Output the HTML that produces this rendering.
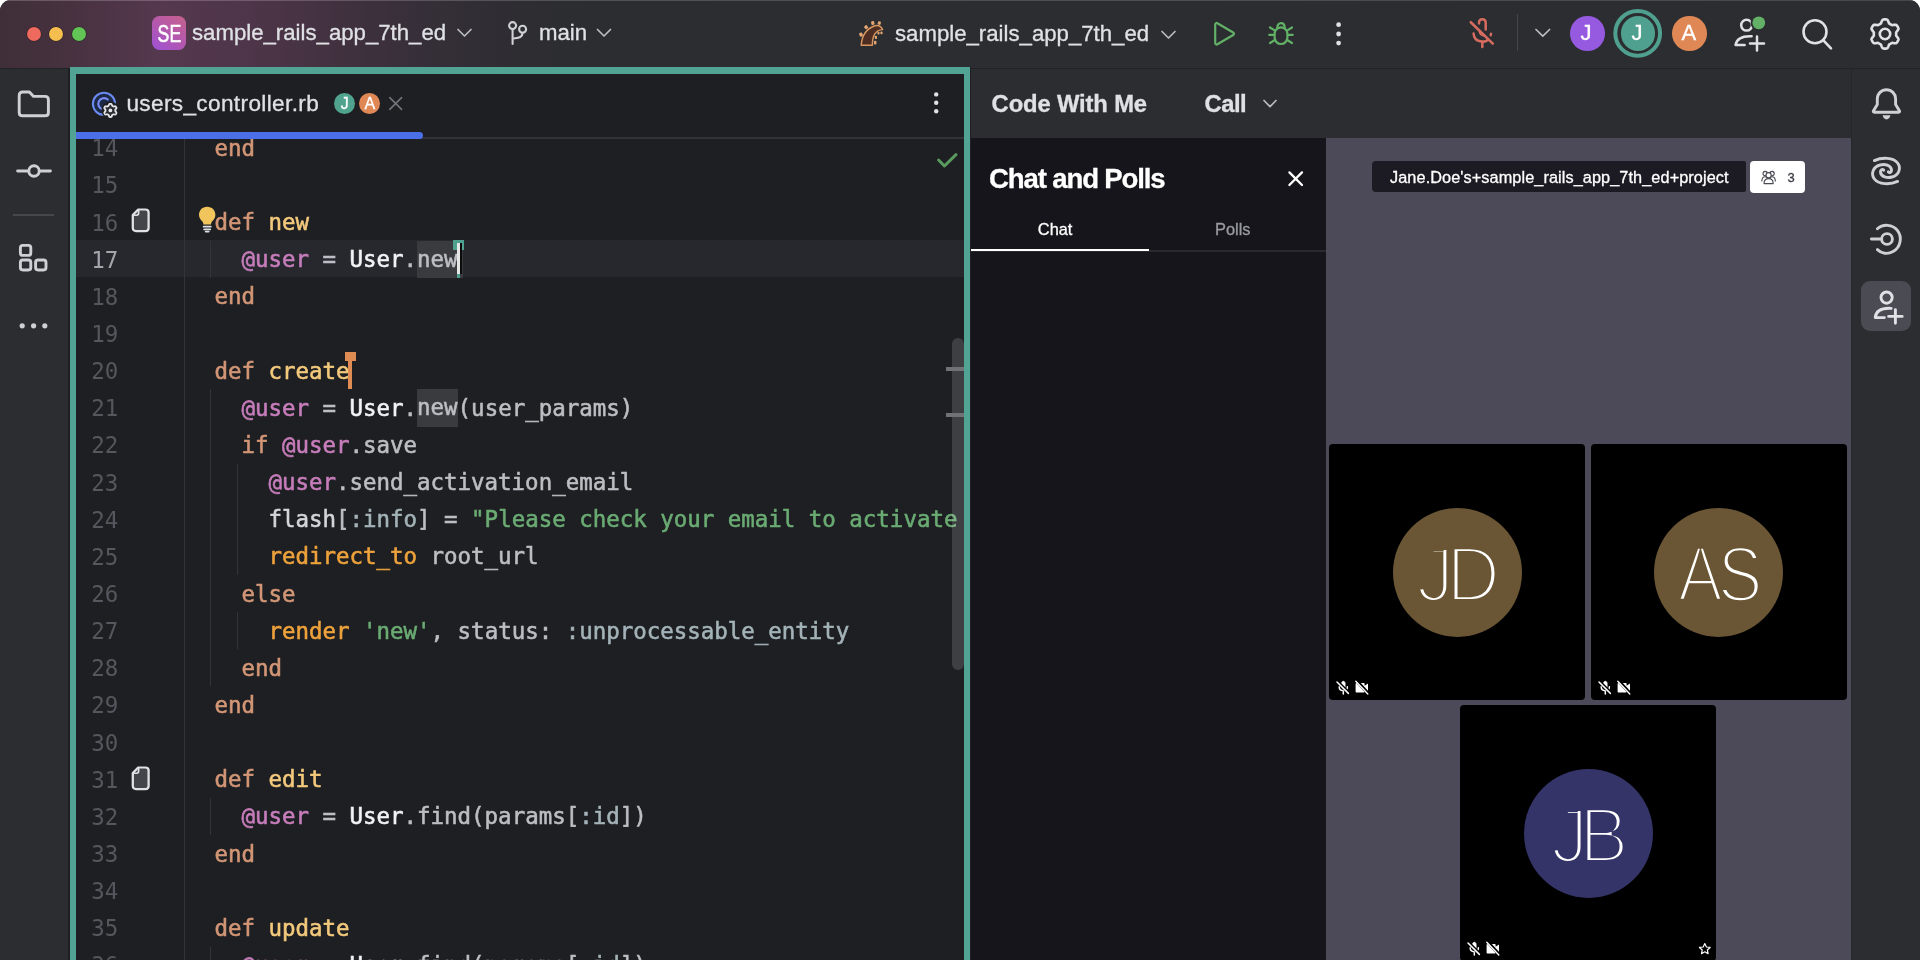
<!DOCTYPE html>
<html lang="en">
<head>
<meta charset="utf-8">
<title>users_controller.rb - sample_rails_app_7th_ed</title>
<style>
*{box-sizing:border-box;margin:0;padding:0}
html,body{width:1920px;height:960px;overflow:hidden;background:#fff}
body{font-family:"Liberation Sans",sans-serif;color:#dfe1e5;position:relative}
.abs{position:absolute}
#win{will-change:transform;position:absolute;left:0;top:0;width:1920px;height:960px;background:#2b2d30;border-radius:11px 11px 0 0;overflow:hidden}
/* ---------- title bar ---------- */
#titlebar{position:absolute;left:0;top:0;width:1920px;height:68px;
 background:linear-gradient(90deg,#3f2f39 0px,#46313e 60px,#55384e 160px,#4e3549 250px,#41313f 340px,#362f39 420px,#2f2d33 500px,#2b2d30 590px,#2b2d30 100%)}
#titlebar:before{content:"";position:absolute;left:0;top:0;right:0;height:1.4px;background:linear-gradient(90deg,rgba(255,255,255,.2),rgba(255,255,255,.13))}
#titleline{position:absolute;left:0;top:67.7px;width:1920px;height:1.3px;background:#222327}
.tl{position:absolute;top:27px;width:14px;height:14px;border-radius:50%;box-shadow:0 0 0 .6px rgba(0,0,0,.4)}
.ui{position:absolute;white-space:nowrap;-webkit-text-stroke:.3px;font-size:22.2px;line-height:30px;color:#dfe1e5;letter-spacing:0}
svg{position:absolute;overflow:visible}
/* ---------- left stripe ---------- */
#lstripe{position:absolute;left:0;top:69px;width:68px;height:891px;background:#2b2d30}
#lgap{position:absolute;left:68px;top:69px;width:2px;height:891px;background:#1e1f22}
/* ---------- editor ---------- */
#edwrap{position:absolute;left:70px;top:67px;width:900.3px;height:900px;background:#51a393;box-shadow:1.2px 0 0 #202125}
#editor{position:absolute;left:6px;top:7px;width:888px;height:900px;background:#1e1f22;overflow:hidden}
#tabline{position:absolute;left:0;top:63px;width:888px;height:2px;background:#313337}
#tabsel{position:absolute;left:0;top:58px;width:347px;height:7px;background:#4a6fe6;border-radius:0 4px 4px 0}
#gutline{position:absolute;left:108px;top:65px;width:1px;height:900px;background:#313438}
#curline{position:absolute;left:0;top:166px;width:888px;height:37.2px;background:#26282e}
.ln{position:absolute;left:0;width:42px;text-align:right;font-family:"DejaVu Sans Mono","Liberation Mono",monospace;font-size:19.8px;line-height:37.143px;color:#4e525a;height:37.143px;white-space:pre}
#code{position:absolute;left:112px;top:55.4px;font-family:"DejaVu Sans Mono","Liberation Mono",monospace;font-size:22.44px;line-height:37.143px;color:#bcbec4}
#code div{height:37.143px;white-space:pre;-webkit-text-stroke:.55px}
#lnums{position:absolute;left:0;top:55.4px;width:42px}
#lnums div{height:37.143px;font-family:"DejaVu Sans Mono","Liberation Mono",monospace;font-size:22.44px;line-height:37.143px;color:#54575d;text-align:right;white-space:pre}
#lnums div.cur{color:#a4a6ad}
.k{color:#d29676}.f{color:#f3c97c}.iv{color:#c77dbb}.w{color:#f2f3f5}.s{color:#6aab73}.r{color:#eea23c}.sy{color:#a3b3b8}.g{color:#bcbec4}
.hl{background:#393b3e;display:inline-block;height:37.143px;position:relative;top:-.5px;padding-left:.4px;margin-left:-.4px}
#hl17{padding-right:5px;margin-right:-5px}
.ig{position:absolute;width:1px;background:#313438}
/* ---------- right panel ---------- */
#cwmhead{position:absolute;left:971px;top:69px;width:880px;height:69px;background:#2b2d30}
#chat{position:absolute;left:971px;top:138px;width:355px;height:822px;background:#16151b}
#video{position:absolute;left:1326px;top:138px;width:525px;height:822px;background:#4c4a58}
#rstripe{position:absolute;left:1851px;top:69px;width:69px;height:891px;background:#2b2d30;box-shadow:inset 1px 0 0 #242629}
.tile{position:absolute;width:256px;height:256px;background:#000;border-radius:4px}
.circ{position:absolute;left:63.5px;top:63.5px;width:129px;height:129px;border-radius:50%}
</style>
</head>
<body>
<div id="win">
<div id="titlebar">
 <div class="tl" style="left:27px;background:#ee6a5e"></div>
 <div class="tl" style="left:49px;background:#f5be4f"></div>
 <div class="tl" style="left:72px;background:#61c454"></div>
 <div class="abs" style="left:152px;top:15.8px;width:34px;height:34px;border-radius:7.5px;background:linear-gradient(215deg,#c6618c 0%,#b458ae 50%,#9d52d6 100%)"></div>
 <svg style="left:152px;top:16px" width="34" height="34" viewBox="0 0 34 34"><text x="5.6" y="25.9" textLength="23.6" lengthAdjust="spacingAndGlyphs" font-family="Liberation Sans,sans-serif" font-size="23.4" fill="#fff" stroke="#fff" stroke-width=".55">SE</text></svg>
 <div class="ui" id="t_proj" style="left:192px;top:18px">sample_rails_app_7th_ed</div>
 <svg style="left:456px;top:26px" width="16" height="14" viewBox="0 0 16 14"><path d="M2 3.5 L8.5 10 L15 3.5" fill="none" stroke="#b9bcc3" stroke-width="1.7" stroke-linecap="round" stroke-linejoin="round"/></svg>
 <svg style="left:504px;top:18px" width="28" height="30" viewBox="0 0 28 30"><g fill="none" stroke="#ced0d6" stroke-width="2.1" stroke-linecap="round"><circle cx="8.6" cy="7.6" r="3.5"/><circle cx="18.6" cy="11.2" r="3.5"/><path d="M8.6 11.2 V26"/><path d="M18.6 14.8 C18.6 19.5 14 20.5 8.8 20.5"/></g></svg>
 <div class="ui" id="t_main" style="left:539px;top:18px">main</div>
 <svg style="left:596px;top:26px" width="16" height="14" viewBox="0 0 16 14"><path d="M1.5 3.5 L8 10 L14.5 3.5" fill="none" stroke="#b9bcc3" stroke-width="1.7" stroke-linecap="round" stroke-linejoin="round"/></svg>
 <!-- rails icon -->
 <svg style="left:858px;top:20px" width="28" height="28" viewBox="0 0 28 28">
  <path d="M3.2 25.2 C4 15 9 8.4 17 5.8 C20.4 5 23.4 6.8 24.6 9.6 C18.6 10 14.2 14.6 14.4 25.2 Z" fill="#4d2c22" stroke="#d99761" stroke-width="1.45" stroke-linejoin="round"/>
  <g fill="#e3a673"><rect x="1.4" y="12.6" width="3.2" height="4" rx="1" transform="rotate(-20 3 14.6)"/><rect x="6.4" y="5.4" width="3.4" height="3.6" rx="1" transform="rotate(-35 8.1 7.2)"/><rect x="13.2" y="1.2" width="3.2" height="3.6" rx="1" transform="rotate(-10 14.8 3)"/><rect x="19.8" y="1.4" width="3" height="3.4" rx="1" transform="rotate(15 21.3 3.1)"/>
  <rect x="19.4" y="12" width="2.2" height="2.6" rx=".8"/><rect x="22.4" y="11.6" width="2.2" height="2.6" rx=".8"/><rect x="16.8" y="15.8" width="2.2" height="3.2" rx=".8"/><rect x="16" y="20.8" width="2.4" height="3.8" rx=".8"/></g>
 </svg>
 <div class="ui" id="t_run" style="left:895px;top:19px">sample_rails_app_7th_ed</div>
 <svg style="left:1160px;top:28px" width="16" height="14" viewBox="0 0 16 14"><path d="M2 3.5 L8.5 10 L15 3.5" fill="none" stroke="#b9bcc3" stroke-width="1.7" stroke-linecap="round" stroke-linejoin="round"/></svg>
 <!-- run -->
 <svg style="left:1212px;top:20px" width="26" height="28" viewBox="0 0 26 28"><path d="M3.2 4.4 C3.2 3.2 4.4 2.6 5.4 3.2 L21.2 12.5 C22.2 13.1 22.2 14.4 21.2 15 L5.4 24.3 C4.4 24.9 3.2 24.3 3.2 23.1 Z" fill="none" stroke="#62b166" stroke-width="2.2" stroke-linejoin="round"/></svg>
 <!-- debug -->
 <svg style="left:1267px;top:20px" width="28" height="28" viewBox="0 0 28 28"><g fill="none" stroke="#62b166" stroke-width="2.2" stroke-linecap="round" stroke-linejoin="round"><path d="M10.3 7.8 C10.3 1.6 17.7 1.6 17.7 7.8"/><rect x="7.6" y="7.4" width="12.8" height="16.6" rx="6.4"/><path d="M2.2 14.8 H7.4 M20.6 14.8 H25.8 M3 7.5 L8 10.6 M25 7.5 L20 10.6 M3 23 L8.2 19.8 M25 23 L19.8 19.8"/></g></svg>
 <svg style="left:1334px;top:20px" width="10" height="28" viewBox="0 0 10 28"><g fill="#dfe1e5"><circle cx="4.6" cy="4.7" r="2.4"/><circle cx="4.6" cy="14" r="2.4"/><circle cx="4.6" cy="23.1" r="2.4"/></g></svg>
 <!-- mic off -->
 <svg style="left:1466px;top:16px" width="32" height="34" viewBox="0 0 32 34"><g fill="none" stroke="#d66b60" stroke-width="2.5" stroke-linecap="round" stroke-linejoin="round"><path d="M13 7.4 V6.6 C13 2 19.7 2 19.7 6.6 V13.4"/><path d="M13.4 13.6 V15 C13.4 19.4 17.4 20.4 19.4 18.8 Z" fill="#d66b60" stroke-width="1.6"/><path d="M7.6 17.6 C8 26.4 19.6 27.6 22.8 22.8"/><path d="M25 17.8 L24.6 19.4"/><path d="M16.3 25.4 V31"/><path d="M6.4 4.6 L28 26" stroke="#2b2d30" stroke-width="2.6"/><path d="M4.8 6.2 L26.8 27.6" stroke-width="2.6"/></g></svg>
 <div class="abs" style="left:1517px;top:14px;width:1px;height:37px;background:#43454a"></div>
 <svg style="left:1534px;top:26px" width="18" height="14" viewBox="0 0 18 14"><path d="M2 3.5 L8.8 10.2 L15.6 3.5" fill="none" stroke="#b9bcc3" stroke-width="1.7" stroke-linecap="round" stroke-linejoin="round"/></svg>
 <div class="abs" style="left:1570px;top:16px;width:34.5px;height:34.5px;border-radius:50%;background:#955ae0"></div>
 <div class="ui" style="left:1580.5px;top:18px;font-size:22px;color:#fff;letter-spacing:0">J</div>
 <svg style="left:1612px;top:8px" width="52" height="52" viewBox="0 0 52 52"><circle cx="25.7" cy="25.3" r="22.4" fill="none" stroke="#4fa08f" stroke-width="4"/></svg>
 <div class="abs" style="left:1620.5px;top:16px;width:34.5px;height:34.5px;border-radius:50%;background:#4fa08f"></div>
 <div class="ui" style="left:1631.5px;top:18px;font-size:22px;color:#fff;letter-spacing:0">J</div>
 <div class="abs" style="left:1672px;top:16px;width:34.5px;height:34.5px;border-radius:50%;background:#e08855"></div>
 <div class="ui" style="left:1681.5px;top:18px;font-size:22px;color:#fff;letter-spacing:0">A</div>
 <!-- add user with dot -->
 <svg style="left:1732px;top:14px" width="36" height="40" viewBox="0 0 36 40"><g fill="none" stroke="#dfe1e5" stroke-width="2.5" stroke-linecap="round" stroke-linejoin="round"><circle cx="14.6" cy="11.2" r="5.4"/><path d="M12.6 31 H3.6 C4.6 24.8 10 21.8 19.6 22.2"/><path d="M25 22.6 V36.6 M18 29.6 H32"/></g><circle cx="26.8" cy="8.8" r="8.2" fill="#2b2d30"/><circle cx="26.8" cy="8.8" r="6.4" fill="#62b166"/></svg>
 <!-- search -->
 <svg style="left:1800px;top:16px" width="36" height="36" viewBox="0 0 36 36"><g fill="none" stroke="#dfe1e5" stroke-width="2.6" stroke-linecap="round"><circle cx="15" cy="15.8" r="11.5"/><path d="M23.6 24.6 L31 32.4"/></g></svg>
 <!-- gear -->
 <svg style="left:1869px;top:17px" width="32" height="34" viewBox="-16 -17 32 34"><g fill="none" stroke="#dfe1e5" stroke-width="2.6" stroke-linejoin="round"><path d="M11.20 0.00 L11.18 0.59 L11.14 1.17 L11.16 1.77 L11.80 2.51 L12.46 3.34 L13.07 4.25 L13.54 5.20 L13.34 5.94 L13.01 6.63 L12.64 7.30 L12.24 7.95 L11.81 8.58 L11.27 9.12 L10.21 9.19 L9.12 9.12 L8.07 8.96 L7.11 8.78 L6.58 9.06 L6.10 9.39 L5.60 9.70 L5.08 9.98 L4.56 10.23 L4.05 10.55 L3.73 11.47 L3.34 12.46 L2.86 13.44 L2.27 14.32 L1.53 14.52 L0.76 14.58 L0.00 14.60 L-0.76 14.58 L-1.53 14.52 L-2.27 14.32 L-2.86 13.44 L-3.34 12.46 L-3.73 11.47 L-4.05 10.55 L-4.56 10.23 L-5.08 9.98 L-5.60 9.70 L-6.10 9.39 L-6.58 9.06 L-7.11 8.78 L-8.07 8.96 L-9.12 9.12 L-10.21 9.19 L-11.27 9.12 L-11.81 8.58 L-12.24 7.95 L-12.64 7.30 L-13.01 6.63 L-13.34 5.94 L-13.54 5.20 L-13.07 4.25 L-12.46 3.34 L-11.80 2.51 L-11.16 1.77 L-11.14 1.17 L-11.18 0.59 L-11.20 0.00 L-11.18 -0.59 L-11.14 -1.17 L-11.16 -1.77 L-11.80 -2.51 L-12.46 -3.34 L-13.07 -4.25 L-13.54 -5.20 L-13.34 -5.94 L-13.01 -6.63 L-12.64 -7.30 L-12.24 -7.95 L-11.81 -8.58 L-11.27 -9.12 L-10.21 -9.19 L-9.12 -9.12 L-8.07 -8.96 L-7.11 -8.78 L-6.58 -9.06 L-6.10 -9.39 L-5.60 -9.70 L-5.08 -9.98 L-4.56 -10.23 L-4.05 -10.55 L-3.73 -11.47 L-3.34 -12.46 L-2.86 -13.44 L-2.27 -14.32 L-1.53 -14.52 L-0.76 -14.58 L-0.00 -14.60 L0.76 -14.58 L1.53 -14.52 L2.27 -14.32 L2.86 -13.44 L3.34 -12.46 L3.73 -11.47 L4.05 -10.55 L4.56 -10.23 L5.08 -9.98 L5.60 -9.70 L6.10 -9.39 L6.58 -9.06 L7.11 -8.78 L8.07 -8.96 L9.12 -9.12 L10.21 -9.19 L11.27 -9.12 L11.81 -8.58 L12.24 -7.95 L12.64 -7.30 L13.01 -6.63 L13.34 -5.94 L13.54 -5.20 L13.07 -4.25 L12.46 -3.34 L11.80 -2.51 L11.16 -1.77 L11.14 -1.17 L11.18 -0.59 L11.20 -0.00 Z"/><circle cx="0" cy="0" r="5.2"/></g></svg>
</div>
<div id="titleline"></div>

<div id="lstripe">
 <svg style="left:16px;top:20px" width="36" height="30" viewBox="0 0 36 30"><path d="M3.2 6.4 C3.2 4.2 4.6 3 6.6 3 H13.4 L17.6 7.4 H29 C31.2 7.4 32.4 8.8 32.4 10.8 V23.4 C32.4 25.6 31.2 26.8 29 26.8 H6.6 C4.6 26.8 3.2 25.6 3.2 23.4 Z" fill="none" stroke="#ced0d6" stroke-width="2.9" stroke-linejoin="round"/></svg>
 <svg style="left:15px;top:92px" width="38" height="20" viewBox="0 0 38 20"><g fill="none" stroke="#ced0d6" stroke-width="2.9" stroke-linecap="round"><circle cx="19" cy="10" r="5.2"/><path d="M2.6 10 H13.6 M24.4 10 H35.4"/></g></svg>
 <div class="abs" style="left:13px;top:144.5px;width:41px;height:2px;background:#45474c"></div>
 <svg style="left:17px;top:173px" width="34" height="32" viewBox="0 0 34 32"><g fill="none" stroke="#ced0d6" stroke-width="2.9" stroke-linejoin="round"><rect x="3.4" y="3.4" width="10.4" height="10" rx="2.4"/><rect x="3.4" y="18" width="10.4" height="10" rx="2.4"/><rect x="18.6" y="18" width="10.4" height="10" rx="2.4"/></g></svg>
 <svg style="left:17px;top:251px" width="34" height="12" viewBox="0 0 34 12"><g fill="#ced0d6"><circle cx="5.2" cy="5.8" r="2.6"/><circle cx="16.6" cy="5.8" r="2.6"/><circle cx="27.8" cy="5.8" r="2.6"/></g></svg>
</div>
<div id="lgap"></div>

<div id="edwrap"><div id="editor">
 <!-- tab -->
 <svg style="left:0;top:0" width="60" height="60" viewBox="0 0 60 60">
  <circle cx="28" cy="29.8" r="11.1" fill="#1c2947" stroke="#6a8af0" stroke-width="2.1"/>
  <path d="M31.81 25.56 A5.7 5.7 0 1 0 27.21 35.44" fill="none" stroke="#7a8ef5" stroke-width="2.1" stroke-linecap="round"/>
  <circle cx="34.4" cy="36.4" r="8.9" fill="#1e1f22"/>
  <g transform="translate(34.4 36.4)"><path d="M4.90 0.00 L4.89 0.32 L4.86 0.64 L5.13 1.02 L5.55 1.49 L5.94 2.02 L6.10 2.53 L5.92 2.92 L5.72 3.30 L5.49 3.67 L5.24 4.02 L4.71 4.13 L4.07 4.07 L3.45 3.93 L2.98 3.89 L2.72 4.07 L2.45 4.24 L2.17 4.39 L1.88 4.53 L1.68 4.95 L1.49 5.55 L1.22 6.15 L0.86 6.54 L0.43 6.59 L0.00 6.60 L-0.43 6.59 L-0.86 6.54 L-1.22 6.15 L-1.49 5.55 L-1.68 4.95 L-1.88 4.53 L-2.17 4.39 L-2.45 4.24 L-2.72 4.07 L-2.98 3.89 L-3.45 3.93 L-4.07 4.07 L-4.71 4.13 L-5.24 4.02 L-5.49 3.67 L-5.72 3.30 L-5.92 2.92 L-6.10 2.53 L-5.94 2.02 L-5.55 1.49 L-5.13 1.02 L-4.86 0.64 L-4.89 0.32 L-4.90 0.00 L-4.89 -0.32 L-4.86 -0.64 L-5.13 -1.02 L-5.55 -1.49 L-5.94 -2.02 L-6.10 -2.53 L-5.92 -2.92 L-5.72 -3.30 L-5.49 -3.67 L-5.24 -4.02 L-4.71 -4.13 L-4.07 -4.07 L-3.45 -3.93 L-2.98 -3.89 L-2.72 -4.07 L-2.45 -4.24 L-2.17 -4.39 L-1.88 -4.53 L-1.68 -4.95 L-1.49 -5.55 L-1.22 -6.15 L-0.86 -6.54 L-0.43 -6.59 L-0.00 -6.60 L0.43 -6.59 L0.86 -6.54 L1.22 -6.15 L1.49 -5.55 L1.68 -4.95 L1.88 -4.53 L2.17 -4.39 L2.45 -4.24 L2.72 -4.07 L2.98 -3.89 L3.45 -3.93 L4.07 -4.07 L4.71 -4.13 L5.24 -4.02 L5.49 -3.67 L5.72 -3.30 L5.92 -2.92 L6.10 -2.53 L5.94 -2.02 L5.55 -1.49 L5.13 -1.02 L4.86 -0.64 L4.89 -0.32 Z" fill="#2a2b30" stroke="#e3e4e8" stroke-width="1.8" stroke-linejoin="round"/><circle r="1.9" fill="#e3e4e8"/></g>
 </svg>
 <div class="ui" id="t_tab" style="left:50.4px;top:14.8px;font-size:22.6px;letter-spacing:.36px">users_controller.rb</div>
 <div class="abs" style="left:257.8px;top:19px;width:21.4px;height:21.4px;border-radius:50%;background:#50a48f"></div>
 <div class="ui" style="left:264.7px;top:14.8px;font-size:16px;color:#fff">J</div>
 <div class="abs" style="left:283.3px;top:19.3px;width:21px;height:21px;border-radius:50%;background:#e08855"></div>
 <div class="ui" style="left:288.5px;top:14.8px;font-size:16px;color:#fff">A</div>
 <svg style="left:312px;top:22px" width="16" height="16" viewBox="0 0 16 16"><path d="M1.8 1.6 L13.6 13.4 M13.6 1.6 L1.8 13.4" fill="none" stroke="#70747b" stroke-width="1.6" stroke-linecap="round"/></svg>
 <svg style="left:855px;top:16px" width="10" height="28" viewBox="0 0 10 28"><g fill="#dfe1e5"><circle cx="5.2" cy="4.4" r="2.2"/><circle cx="5.2" cy="12.8" r="2.2"/><circle cx="5.2" cy="21.2" r="2.2"/></g></svg>
 <div id="tabline"></div>
 <div id="tabsel"></div>
 <!-- editor body -->
 <div id="edbody" class="abs" style="left:0;top:65px;width:888px;height:900px;overflow:hidden">
  <div id="curline" style="top:101.1px"></div>
  <div id="gutline" style="top:0"></div>
  <div id="lnums" style="left:.4px;top:-8.7px">
<div>14</div>
<div>15</div>
<div>16</div>
<div class="cur">17</div>
<div>18</div>
<div>19</div>
<div>20</div>
<div>21</div>
<div>22</div>
<div>23</div>
<div>24</div>
<div>25</div>
<div>26</div>
<div>27</div>
<div>28</div>
<div>29</div>
<div>30</div>
<div>31</div>
<div>32</div>
<div>33</div>
<div>34</div>
<div>35</div>
<div>36</div>
</div>
<div class="ig" style="left:134.0px;top:101.9px;height:37.1px"></div>
<div class="ig" style="left:134.0px;top:250.4px;height:297.1px"></div>
<div class="ig" style="left:161.0px;top:324.7px;height:111.4px"></div>
<div class="ig" style="left:161.0px;top:473.3px;height:37.1px"></div>
<div class="ig" style="left:134.0px;top:659.0px;height:37.1px"></div>
<div class="ig" style="left:134.0px;top:807.6px;height:37.1px"></div>
<div id="code" style="left:111.4px;top:-9.1px">
<div>  <span class="k">end</span></div>
<div></div>
<div>  <span class="k">def</span> <span class="f">new</span></div>
<div>    <span class="iv">@user</span> = <span class="w">User</span>.<span class="hl" id="hl17">new</span></div>
<div>  <span class="k">end</span></div>
<div></div>
<div>  <span class="k">def</span> <span class="f">create</span></div>
<div>    <span class="iv">@user</span> = <span class="w">User</span>.<span class="hl">new</span>(user_params)</div>
<div>    <span class="k">if</span> <span class="iv">@user</span>.save</div>
<div>      <span class="iv">@user</span>.send_activation_email</div>
<div>      <span style="color:#d3d5da">flash</span>[<span class="sy">:info</span>] = <span class="s">"Please check your email to activate your account."</span></div>
<div>      <span class="r">redirect_to</span> root_url</div>
<div>    <span class="k">else</span></div>
<div>      <span class="r">render</span> <span class="s">'new'</span>, <span class="g">status:</span> <span class="sy">:unprocessable_entity</span></div>
<div>    <span class="k">end</span></div>
<div>  <span class="k">end</span></div>
<div></div>
<div>  <span class="k">def</span> <span class="f">edit</span></div>
<div>    <span class="iv">@user</span> = <span class="w">User</span>.find(params[<span class="sy">:id</span>])</div>
<div>  <span class="k">end</span></div>
<div></div>
<div>  <span class="k">def</span> <span class="f">update</span></div>
<div>    <span class="iv">@user</span> = <span class="w">User</span>.find(params[<span class="sy">:id</span>])</div>
</div>

<!-- gutter icons -->
<svg style="left:55px;top:68.9px" width="20" height="24.8" viewBox="0 0 20 26" preserveAspectRatio="none"><path d="M7.2 1.6 H14.4 C16.4 1.6 17.6 2.8 17.6 4.8 V21 C17.6 23 16.4 24.2 14.4 24.2 H5 C3 24.2 1.8 23 1.8 21 V7.4 Z" fill="#43454a" stroke="#dfe1e5" stroke-width="2.3" stroke-linejoin="round"/><path d="M7.6 2 V5.6 C7.6 7 7 7.6 5.6 7.6 H2.2" fill="none" stroke="#dfe1e5" stroke-width="1.7"/></svg>
<svg style="left:55px;top:627.3px" width="20" height="24.8" viewBox="0 0 20 26" preserveAspectRatio="none"><path d="M7.2 1.6 H14.4 C16.4 1.6 17.6 2.8 17.6 4.8 V21 C17.6 23 16.4 24.2 14.4 24.2 H5 C3 24.2 1.8 23 1.8 21 V7.4 Z" fill="#43454a" stroke="#dfe1e5" stroke-width="2.3" stroke-linejoin="round"/><path d="M7.6 2 V5.6 C7.6 7 7 7.6 5.6 7.6 H2.2" fill="none" stroke="#dfe1e5" stroke-width="1.7"/></svg>
<!-- bulb -->
<svg style="left:122px;top:67px" width="19" height="28" viewBox="0 0 19 28"><path d="M9.2 0.8 C4.4 0.8 1 4.4 1 8.8 C1 12 2.8 13.8 4.4 15.6 C5.2 16.6 5.4 17.6 5.4 18.6 H13 C13 17.6 13.2 16.6 14 15.6 C15.6 13.8 17.4 12 17.4 8.8 C17.4 4.4 14 0.8 9.2 0.8 Z" fill="#f2c55c"/><path d="M5.6 20.6 H12.8 M6.2 23.4 H12.2" stroke="#dfe1e5" stroke-width="1.8" stroke-linecap="round"/><path d="M7.6 25.6 H10.8" stroke="#dfe1e5" stroke-width="1.6" stroke-linecap="round"/></svg>
<!-- check -->
<svg style="left:860px;top:13px" width="24" height="18" viewBox="0 0 24 18"><path d="M2.6 8 L8.4 14 L20 2.6" fill="none" stroke="#5a9a5e" stroke-width="3" stroke-linecap="round" stroke-linejoin="round"/></svg>
<!-- scrollbar -->
<div class="abs" style="left:876.3px;top:199px;width:11.7px;height:332px;border-radius:6px;background:rgba(255,255,255,.145)"></div>
<div class="abs" style="left:870px;top:228px;width:18px;height:3.6px;background:#6f7276"></div>
<div class="abs" style="left:870px;top:274px;width:18px;height:3.6px;background:#6f7276"></div>
<!-- carets -->
<div class="abs" style="left:377px;top:101.3px;width:11px;height:9.4px;background:#4fa08f"></div>
<div class="abs" style="left:380.6px;top:101.3px;width:3.8px;height:37.6px;background:#4fa08f"></div>
<div class="abs" style="left:384.4px;top:104px;width:1.6px;height:31.4px;background:#0b0b0c"></div>
<div class="abs" style="left:380.6px;top:104px;width:3.8px;height:31.2px;background:#e6e6e6"></div>
<div class="abs" style="left:269.4px;top:213.4px;width:10.6px;height:8.8px;background:#de8c54"></div>
<div class="abs" style="left:272px;top:213.4px;width:4.4px;height:36.2px;background:#de8c54"></div>

 </div>
</div></div>

<div id="cwmhead">
 <div class="ui" id="t_cwm" style="left:20.6px;top:19.6px;font-weight:bold;font-size:23.8px;letter-spacing:-.15px">Code With Me</div>
 <div class="ui" id="t_call" style="left:233.6px;top:19.6px;font-weight:bold;font-size:23.8px;letter-spacing:-.55px">Call</div>
 <svg style="left:291px;top:28px" width="16" height="14" viewBox="0 0 16 14"><path d="M2 3.5 L8 9.6 L14 3.5" fill="none" stroke="#b9bcc3" stroke-width="1.7" stroke-linecap="round" stroke-linejoin="round"/></svg>
</div>
<div id="chat">
 <div class="ui" id="t_cap" style="left:18px;top:23px;font-weight:bold;font-size:27.6px;line-height:36px;color:#fff;letter-spacing:-1.15px">Chat and Polls</div>
 <svg style="left:316px;top:32px" width="18" height="18" viewBox="0 0 18 18"><path d="M2.4 2.4 L15 15 M15 2.4 L2.4 15" fill="none" stroke="#fff" stroke-width="2.3" stroke-linecap="round"/></svg>
 <div class="ui" id="t_chat" style="left:66.8px;top:78px;font-size:16.4px;line-height:26px;color:#fff">Chat</div>
 <div class="ui" id="t_polls" style="left:244px;top:78px;font-size:16.4px;line-height:26px;color:#9a9aa2">Polls</div>
 <div class="abs" style="left:0;top:112.4px;width:355px;height:1.4px;background:#2a2930"></div>
 <div class="abs" style="left:0;top:110.5px;width:177.8px;height:2.5px;background:#fff"></div>
</div>
<div id="video">
 <div class="abs" style="left:45.7px;top:23.1px;width:374.5px;height:31.2px;border-radius:4px 2px 2px 4px;background:#1c1b23"></div>
 <div class="ui" id="t_room" style="left:64px;top:26px;font-size:16.3px;line-height:26px;color:#fff;letter-spacing:.08px">Jane.Doe's+sample_rails_app_7th_ed+project</div>
 <div class="abs" style="left:424px;top:23.2px;width:55px;height:31.6px;border-radius:4px;background:#fff"></div>
 <svg style="left:433px;top:30px" width="20" height="18" viewBox="0 0 20 18"><g fill="#fff" stroke="#4a4a55" stroke-width="1.1" stroke-linejoin="round"><circle cx="6.2" cy="5.6" r="2.2"/><circle cx="13" cy="5.6" r="2.2"/><path d="M2.8 13.6 C2.8 10.2 4.2 8.8 6.2 8.8 C7.8 8.8 8.6 10 8.8 11.4"/><path d="M16.4 13.6 C16.4 10.2 15 8.8 13 8.8 C11.4 8.8 10.6 10 10.4 11.4"/><circle cx="9.6" cy="7.2" r="2.6"/><path d="M5 15.6 C5 12 7 10.6 9.6 10.6 C12.2 10.6 14.2 12 14.2 15.6 Z"/></g></svg>
 <div class="ui" id="t_three" style="left:461.5px;top:26.5px;font-size:13px;line-height:26px;color:#3c3c46">3</div>
 <!-- tiles -->
 <div class="tile" style="left:3.4px;top:306px"><div class="circ" style="background:#6a5634"></div>
  <svg style="left:0;top:0" width="256" height="256"><text transform="translate(87.8 156.8) scale(0.95 1)" x="0 31.2" y="0" font-family="Liberation Sans,sans-serif" font-size="78" fill="#fff" stroke="#6a5634" stroke-width="4" vector-effect="non-scaling-stroke">JD</text><rect x="101.2" y="101.0" width="13.4" height="6.6" fill="#6a5634"/></svg>
  <svg style="left:5px;top:235px" width="40" height="18" viewBox="0 0 40 18"><g fill="none" stroke="#fff" stroke-width="1.5" stroke-linecap="round"><path d="M7.6 4.4 C7.6 1.6 11 1.6 11 4.4 V7.6 C11 10.4 7.6 10.4 7.6 7.6 Z" fill="#fff" stroke-width="1"/><path d="M5.2 7.8 C5.2 13 13.4 13 13.4 7.8 M9.3 11.8 V15"/><path d="M3.4 2.6 L14.6 14" stroke="#000" stroke-width="3.4"/><path d="M3 3 L14.4 14.4"/></g><path d="M21.6 5 C21.6 4.4 22 4 22.6 4 H29.6 C30.2 4 30.6 4.4 30.6 5 V6.8 L34 4.6 V12.8 L30.6 10.6 V12.6 C30.6 13.2 30.2 13.6 29.6 13.6 H22.6 C22 13.6 21.6 13.2 21.6 12.6 Z" fill="#fff"/><path d="M22.4 1.6 L34.4 14.6" stroke="#000" stroke-width="3.2"/><path d="M21.8 2.2 L33.8 15" stroke="#fff" stroke-width="1.4" stroke-linecap="round"/></svg>
 </div>
 <div class="tile" style="left:264.6px;top:306px"><div class="circ" style="background:#6a5634"></div>
  <svg style="left:0;top:0" width="256" height="256"><text transform="translate(87.2 156.8) scale(0.85 1)" x="0 46.7" y="0" font-family="Liberation Sans,sans-serif" font-size="78" fill="#fff" stroke="#6a5634" stroke-width="3.3" vector-effect="non-scaling-stroke">AS</text></svg>
  <svg style="left:5px;top:235px" width="40" height="18" viewBox="0 0 40 18"><g fill="none" stroke="#fff" stroke-width="1.5" stroke-linecap="round"><path d="M7.6 4.4 C7.6 1.6 11 1.6 11 4.4 V7.6 C11 10.4 7.6 10.4 7.6 7.6 Z" fill="#fff" stroke-width="1"/><path d="M5.2 7.8 C5.2 13 13.4 13 13.4 7.8 M9.3 11.8 V15"/><path d="M3.4 2.6 L14.6 14" stroke="#000" stroke-width="3.4"/><path d="M3 3 L14.4 14.4"/></g><path d="M21.6 5 C21.6 4.4 22 4 22.6 4 H29.6 C30.2 4 30.6 4.4 30.6 5 V6.8 L34 4.6 V12.8 L30.6 10.6 V12.6 C30.6 13.2 30.2 13.6 29.6 13.6 H22.6 C22 13.6 21.6 13.2 21.6 12.6 Z" fill="#fff"/><path d="M22.4 1.6 L34.4 14.6" stroke="#000" stroke-width="3.2"/><path d="M21.8 2.2 L33.8 15" stroke="#fff" stroke-width="1.4" stroke-linecap="round"/></svg>
 </div>
 <div class="tile" style="left:134.3px;top:567px"><div class="circ" style="background:#343468"></div>
  <svg style="left:0;top:0" width="256" height="256"><text transform="translate(91.2 156.6) scale(0.94 1)" x="0 30.2" y="0" font-family="Liberation Sans,sans-serif" font-size="78" fill="#fff" stroke="#343468" stroke-width="4" vector-effect="non-scaling-stroke">JB</text><rect x="104.4" y="100.6" width="13.4" height="6.6" fill="#343468"/></svg>
  <svg style="left:5px;top:235px" width="40" height="18" viewBox="0 0 40 18"><g fill="none" stroke="#fff" stroke-width="1.5" stroke-linecap="round"><path d="M7.6 4.4 C7.6 1.6 11 1.6 11 4.4 V7.6 C11 10.4 7.6 10.4 7.6 7.6 Z" fill="#fff" stroke-width="1"/><path d="M5.2 7.8 C5.2 13 13.4 13 13.4 7.8 M9.3 11.8 V15"/><path d="M3.4 2.6 L14.6 14" stroke="#000" stroke-width="3.4"/><path d="M3 3 L14.4 14.4"/></g><path d="M21.6 5 C21.6 4.4 22 4 22.6 4 H29.6 C30.2 4 30.6 4.4 30.6 5 V6.8 L34 4.6 V12.8 L30.6 10.6 V12.6 C30.6 13.2 30.2 13.6 29.6 13.6 H22.6 C22 13.6 21.6 13.2 21.6 12.6 Z" fill="#fff"/><path d="M22.4 1.6 L34.4 14.6" stroke="#000" stroke-width="3.2"/><path d="M21.8 2.2 L33.8 15" stroke="#fff" stroke-width="1.4" stroke-linecap="round"/></svg>
  <svg style="left:238px;top:237.4px" width="13.6" height="13.6" viewBox="0 0 16 16"><path d="M8 1.8 L9.9 5.9 L14.3 6.4 L11 9.4 L11.9 13.8 L8 11.6 L4.1 13.8 L5 9.4 L1.7 6.4 L6.1 5.9 Z" fill="none" stroke="#fff" stroke-width="1.4" stroke-linejoin="round"/></svg>
 </div>
</div>
<div id="rstripe">
 <!-- bell -->
 <svg style="left:18px;top:16px" width="36" height="36" viewBox="0 0 36 36"><path d="M8.3 19.4 V13.85 A9.15 9.15 0 0 1 26.6 13.85 V19.4 L30.4 25.8 C30.9 26.7 30.5 27.3 29.6 27.3 H5.3 C4.4 27.3 4 26.7 4.5 25.8 Z" fill="none" stroke="#ced0d6" stroke-width="2.9" stroke-linejoin="round"/><path d="M13.6 30.3 H21.4 C21 33 19.4 34.4 17.5 34.4 C15.6 34.4 14 33 13.6 30.3 Z" fill="#ced0d6"/></svg>
 <!-- AI spiral -->
 <svg style="left:19px;top:86px" width="32" height="32" viewBox="-16 -16 32 32"><g fill="none" stroke="#ced0d6" stroke-width="2.9" stroke-linecap="round"><path d="M-11.6 -10.4 C-4 -13.9 7.5 -13.6 11.6 -8 C15.4 -3 13 4.2 6 6 C1 7.3 -4.6 6 -5.5 1.4 C-5.9 -1.2 -3.6 -2.2 -2.3 -0.9"/><path d="M-11.6 -10.4 C-4 -13.9 7.5 -13.6 11.6 -8 C15.4 -3 13 4.2 6 6 C1 7.3 -4.6 6 -5.5 1.4 C-5.9 -1.2 -3.6 -2.2 -2.3 -0.9" transform="rotate(180)"/></g></svg>
 <!-- target/endpoint -->
 <svg style="left:17px;top:151.5px" width="36" height="36" viewBox="0 0 36 36"><g fill="none" stroke="#ced0d6" stroke-width="2.9" stroke-linecap="round"><path d="M9.4 7.8 C15 2.6 24.6 3.2 29.4 9.4 C34.6 16.2 32.6 26.4 25 30.6 C19.6 33.6 13.4 32.6 9.4 28.6"/><circle cx="19" cy="18" r="5.4"/><path d="M3.4 18 H13.4"/></g></svg>
 <!-- selected add user -->
 <div class="abs" style="left:9.5px;top:212px;width:50px;height:50px;border-radius:9px;background:#4b4b54"></div>
 <svg style="left:18.6px;top:219px" width="36" height="38" viewBox="0 0 36 38"><g fill="none" stroke="#dfe1e5" stroke-width="2.9" stroke-linecap="round" stroke-linejoin="round"><circle cx="16.6" cy="9.6" r="5.6"/><path d="M14.4 29.6 H5.2 C6 23 11.6 19.8 21.2 20.4"/><path d="M25.4 21.6 V35.2 M18.6 28.4 H32.2"/></g></svg>
</div>

</div>
</body>
</html>
